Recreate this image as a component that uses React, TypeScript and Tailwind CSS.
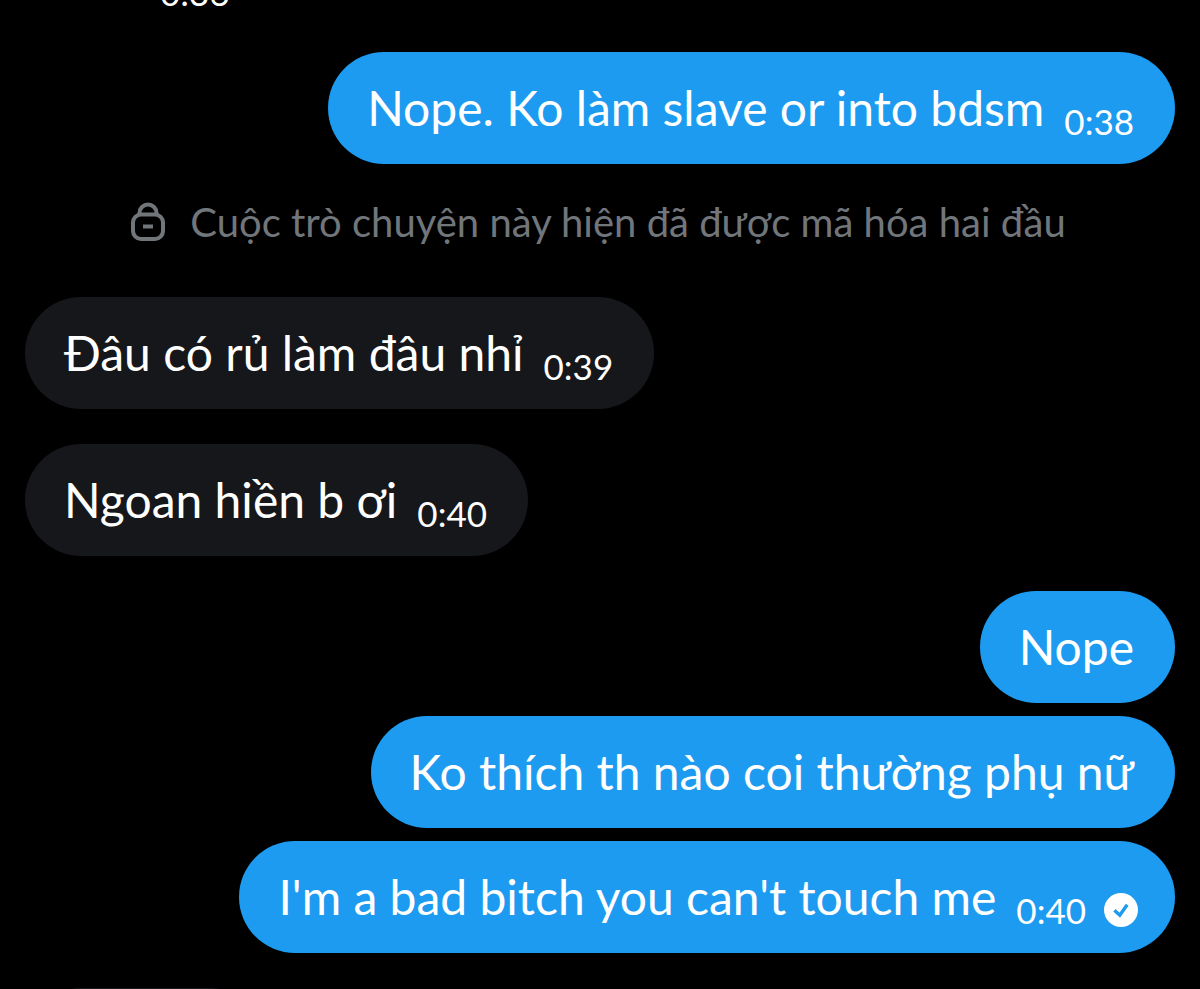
type MessageProps = {
  text: string;
  time?: string;
  mine?: boolean;
  sent?: boolean;
};

function SentIcon() {
  return (
    <svg viewBox="0 0 34 34" className="ml-[18px] size-[34px] shrink-0" role="img" aria-label="Sent">
      <circle cx="17" cy="17" r="17" fill="#fff" />
      <path d="M10.4 17.2l5.4 5 7.4-10.4" fill="none" stroke="#1d9bf0" strokeWidth="3.4" />
    </svg>
  );
}

function LockIcon() {
  return (
    <svg viewBox="0 0 36 40" className="h-[40px] w-[36px] shrink-0" fill="none" stroke="#71767b" strokeWidth="4" aria-hidden="true">
      <rect x="3" y="12.5" width="30" height="24.5" rx="8" />
      <path d="M9.5 12.5v-1.5a8.5 8.5 0 0 1 17 0v1.5" />
      <path d="M13 24.5h10" />
    </svg>
  );
}

function Message({ text, time, mine, sent }: MessageProps) {
  return (
    <div className={`flex ${mine ? 'justify-end' : 'justify-start'}`}>
      <div
        className={`flex min-h-[112px] items-center rounded-[56px] pl-[39px] ${sent ? 'pr-[37px]' : 'pr-[41px]'} ${
          mine ? 'bg-[#1d9bf0]' : 'bg-[#16171a]'
        }`}
      >
        <p className="text-[48px] leading-[60px]">{text}</p>
        {time && (
          <div className="ml-[20px] flex items-center pt-[26px]">
            <time className="text-[35px] leading-[40px]">{time}</time>
            {sent && <SentIcon />}
          </div>
        )}
      </div>
    </div>
  );
}

export default function App() {
  return (
    <main className="flex h-screen flex-col overflow-hidden bg-black px-[25px] font-['Lato','Noto_Sans',sans-serif] text-white">
      {/* Time under the previous message, scrolled almost out of view */}
      <div className="flex h-[12px] shrink-0 items-end pl-[135px]">
        <time className="text-[35px] leading-[40px]">0:36</time>
      </div>

      <div className="flex shrink-0 flex-col pt-[40px]">
        <Message text="Nope. Ko làm slave or into bdsm" time="0:38" mine />

        {/* Encryption notice */}
        <div className="flex items-center justify-center gap-[24px] pt-[34px] pr-[4px] pb-[51px] text-[#71767b]">
          <LockIcon />
          <p className="text-[40px] leading-[48px]">Cuộc trò chuyện này hiện đã được mã hóa hai đầu</p>
        </div>

        <div className="flex flex-col gap-[35px]">
          <Message text="Đâu có rủ làm đâu nhỉ" time="0:39" />
          <Message text="Ngoan hiền b ơi" time="0:40" />

          <div className="flex flex-col gap-[13px]">
            <Message text="Nope" mine />
            <Message text="Ko thích th nào coi thường phụ nữ" mine />
            <Message text="I'm a bad bitch you can't touch me" time="0:40" mine sent />
          </div>

          {/* Next message, just coming into view */}
          <div className="h-[112px] w-[240px] rounded-[56px] bg-[#16171a]" />
        </div>
      </div>
    </main>
  );
}
